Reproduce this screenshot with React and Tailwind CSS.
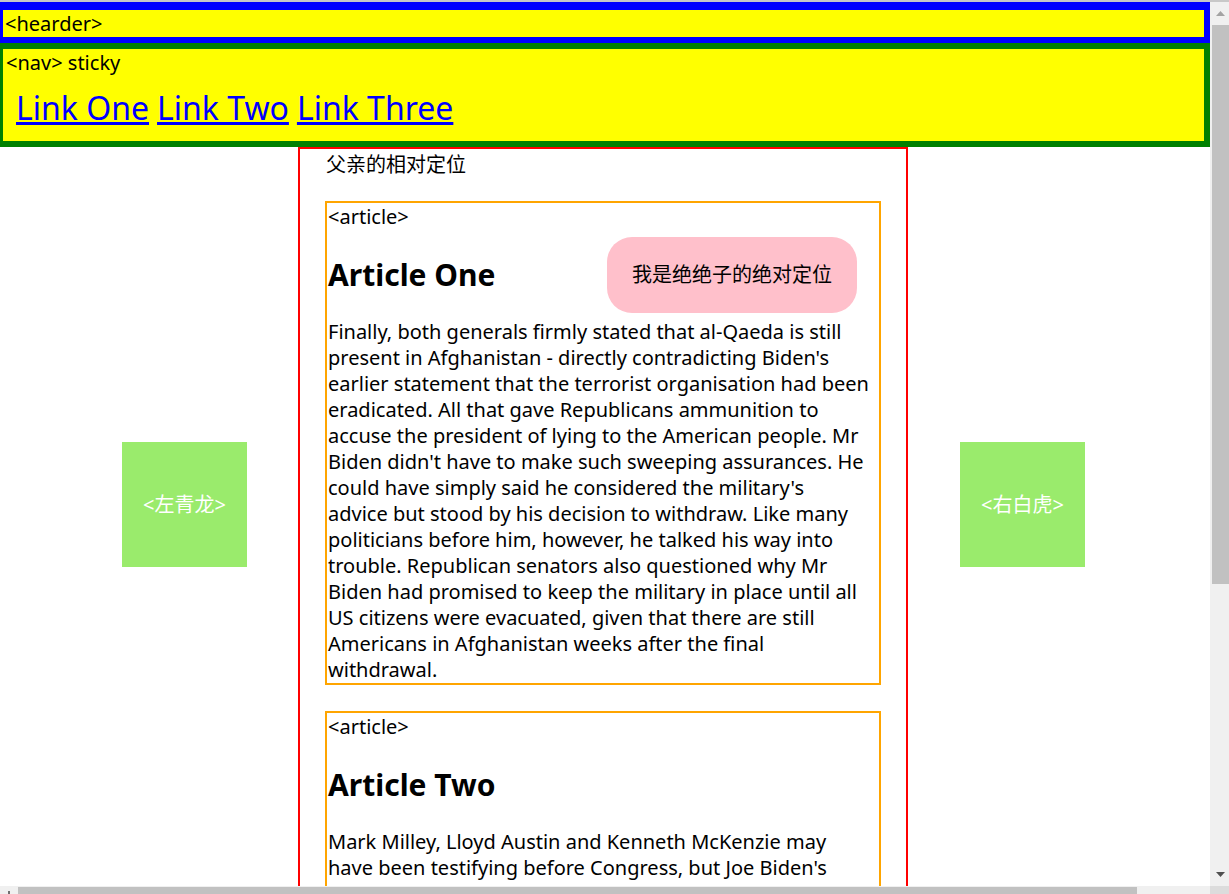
import React from 'react';

const ARTICLES = [
    {
        title: 'Article One',
        lines: [
            'Finally, both generals firmly stated that al-Qaeda is still',
            "present in Afghanistan - directly contradicting Biden's",
            'earlier statement that the terrorist organisation had been',
            'eradicated. All that gave Republicans ammunition to',
            'accuse the president of lying to the American people. Mr',
            "Biden didn't have to make such sweeping assurances. He",
            "could have simply said he considered the military's",
            'advice but stood by his decision to withdraw. Like many',
            'politicians before him, however, he talked his way into',
            'trouble. Republican senators also questioned why Mr',
            'Biden had promised to keep the military in place until all',
            'US citizens were evacuated, given that there are still',
            'Americans in Afghanistan weeks after the final',
            'withdrawal.'
        ],
        badge: true
    },
    {
        title: 'Article Two',
        lines: [
            'Mark Milley, Lloyd Austin and Kenneth McKenzie may',
            "have been testifying before Congress, but Joe Biden's"
        ],
        badge: false
    }
];

const Article = ({ title, lines, badge }) => (
    <article className={`relative border-2 border-[#ffa500] px-px pt-px ${badge ? '' : 'pb-[40px]'}`}>
        <div className="leading-[26px]">&lt;article&gt;</div>
        <h2 className="mt-[25px] text-[30px] font-bold leading-[39px]">{title}</h2>
        <p className="mt-[25px] leading-[26px] whitespace-nowrap">
            {lines.map((line, i) => (
                <React.Fragment key={i}>
                    {line}
                    {i < lines.length - 1 && <br />}
                </React.Fragment>
            ))}
        </p>
        {badge && (
            <div className="absolute left-[280px] top-[34px] w-[250px] h-[76px] rounded-[25px] bg-[#ffc0cb] flex items-center justify-center">
                我是绝绝子的绝对定位
            </div>
        )}
    </article>
);

const SideBox = ({ label }) => (
    <div className="w-[125px] h-[125px] bg-[#9aeb6c] text-white flex items-center justify-center pt-px">
        {label}
    </div>
);

export default function App() {
    return (
        <div className="h-screen w-full overflow-hidden flex flex-col bg-white text-black text-[20px] font-['Segoe_UI','Noto_Sans','Noto_Sans_CJK_SC',sans-serif]">
            <div className="h-[2px] bg-[#c8c8c8] shrink-0" />

            <div className="flex flex-1 min-h-0">
                {/* Page */}
                <div className="flex-1 min-w-0 flex flex-col overflow-hidden">
                    <header className="shrink-0 h-[41px] border-t-[8px] border-b-[6px] border-l-[3px] border-r-[6px] border-[#0000ff] bg-[#ffff00] pl-[2px] pt-px leading-[26px]">
                        &lt;hearder&gt;
                    </header>

                    <nav className="shrink-0 h-[104px] border-y-[6px] border-l-[3px] border-r-[6px] border-[#008000] bg-[#ffff00] pl-[3px]">
                        <div className="leading-[26px] pt-px">&lt;nav&gt; sticky</div>
                        <ul className="flex gap-[8px] pl-[10px] mt-[12px] text-[32px] leading-[40px]">
                            <li><a href="#" className="text-[#0000ff] underline">Link One</a></li>
                            <li><a href="#" className="text-[#0000ff] underline">Link Two</a></li>
                            <li><a href="#" className="text-[#0000ff] underline">Link Three</a></li>
                        </ul>
                    </nav>

                    <main className="flex flex-1 min-h-0">
                        <aside className="w-[298px] shrink-0 pl-[122px] pt-[295px]">
                            <SideBox label="<左青龙>" />
                        </aside>

                        <section className="w-[610px] shrink-0 border-x-2 border-t-2 border-[#ff0000] px-[25px] pt-[3px]">
                            <div className="leading-[26px] pl-px">父亲的相对定位</div>
                            <div className="mt-[23px] flex flex-col gap-[26px]">
                                {ARTICLES.map(a => (
                                    <Article key={a.title} {...a} />
                                ))}
                            </div>
                        </section>

                        <aside className="flex-1 pl-[52px] pt-[295px]">
                            <SideBox label="<右白虎>" />
                        </aside>
                    </main>
                </div>

                {/* Vertical scrollbar */}
                <div className="w-[19px] shrink-0 bg-[#f0f0f0] flex flex-col items-end">
                    <div className="w-[17px] h-[23px] flex items-center justify-center">
                        <svg width="9" height="5" viewBox="0 0 9 5"><path d="M0 5 L4.5 0 L9 5 Z" fill="#a3a3a3" /></svg>
                    </div>
                    <div className="w-[17px] h-[559px] bg-[#c1c1c1]" />
                    <div className="flex-1" />
                    <div className="w-[17px] h-[18px] flex items-start justify-center pt-[4px]">
                        <svg width="9" height="5" viewBox="0 0 9 5"><path d="M0 0 L9 0 L4.5 5 Z" fill="#505050" /></svg>
                    </div>
                </div>
            </div>

            {/* Horizontal scrollbar */}
            <div className="h-[8px] shrink-0 flex bg-[#f0f0f0]">
                <div className="w-[18px] shrink-0 flex items-end justify-center">
                    <div className="w-[2px] h-[3px] bg-[#707070]" />
                </div>
                <div className="w-[1119px] mt-px bg-[#c1c1c1]" />
                <div className="flex-1" />
                <div className="w-[19px] shrink-0 bg-[#dcdcdc]" />
            </div>
        </div>
    );
}
